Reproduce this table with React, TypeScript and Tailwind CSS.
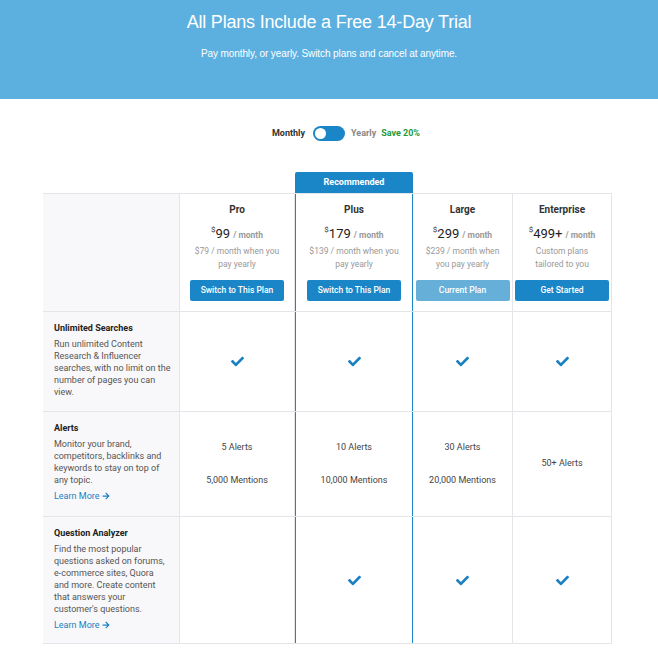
import { FaCheck, FaArrowRight } from "react-icons/fa"

const cols = "grid grid-cols-[137px_115px_118px_100px_99px]"

type Plan = {
    name: string
    price: string
    yearly: string[]
    button: string
    current?: boolean
    plus?: boolean
}

const plans: Plan[] = [
    { name: "Pro", price: "99", yearly: ["$79 / month when you", "pay yearly"], button: "Switch to This Plan" },
    { name: "Plus", price: "179", yearly: ["$139 / month when you", "pay yearly"], button: "Switch to This Plan", plus: true },
    { name: "Large", price: "299", yearly: ["$239 / month when", "you pay yearly"], button: "Current Plan", current: true },
    { name: "Enterprise", price: "499+", yearly: ["Custom plans", "tailored to you"], button: "Get Started" },
]

const Check = () => <FaCheck className="text-[#1a80c2] w-[13px] h-[13px]" />

const Cell = ({ plus, children }: { plus?: boolean; children?: React.ReactNode }) => {
    const side = plus ? "border-x border-[#1a86c7]" : "border-r border-[#e3e5e8]"
    return <div className={`${side} flex flex-col items-center justify-center text-[9px] text-[#444] bg-white`}>{children}</div>
}

const Feature = ({ title, lines, learn }: { title: string; lines: string[]; learn?: boolean }) => (
    <div className="bg-[#f8f8fa] border-r border-[#e3e5e8] pl-[11px] pr-[6px] pt-[10px] pb-[10px]">
        <div className="text-[9px] font-bold text-[#222] leading-[12px]">{title}</div>
        <div className="text-[9px] text-[#555] leading-[12px] mt-[4px] whitespace-nowrap">
            {lines.map((l) => <div key={l}>{l}</div>)}
        </div>
        {learn && (
            <div className="text-[9px] text-[#1a7fc1] leading-[12px] mt-[4px] flex items-center gap-[2px]">
                Learn More <FaArrowRight className="w-[8px] h-[8px]" />
            </div>
        )}
    </div>
)

export default function App() {
    return (
        <div className="min-h-[648px] bg-white" style={{ fontFamily: "Roboto, 'Liberation Sans', sans-serif" }}>
            <div className="bg-[#5cb0df] h-[99px] flex flex-col items-center text-white" style={{ fontFamily: "'Liberation Sans', Arial, sans-serif" }}>
                <h1 className="text-[18px] mt-[11px] leading-[22px] tracking-[-0.2px]">All Plans Include a Free 14-Day Trial</h1>
                <p className="text-[10px] mt-[15px] leading-[12px] tracking-[-0.1px]">Pay monthly, or yearly. Switch plans and cancel at anytime.</p>
            </div>

            <div className="flex items-center justify-center mt-[27px] pl-[34px] text-[9px] font-bold">
                <span className="text-[#333]">Monthly</span>
                <div className="ml-[8px] w-[32px] h-[15px] rounded-full bg-[#1a86c7] flex items-center px-[2px]">
                    <div className="w-[11px] h-[11px] rounded-full bg-white"></div>
                </div>
                <span className="text-[#888] ml-[6px]">Yearly</span>
                <span className="text-[#1f9a3c] ml-[5px]">Save 20%</span>
            </div>

            <div className="ml-[43px] mt-[31px] w-[569px]">
                <div className={cols}>
                    <div></div>
                    <div></div>
                    <div className="bg-[#1a86c7] h-[21px] rounded-t-[2px] text-white text-[9px] font-bold flex items-center justify-center">Recommended</div>
                </div>

                <div className={`${cols} border-y border-[#e3e5e8] h-[119px]`}>
                    <div className="bg-[#f8f8fa] border-r border-[#e3e5e8]"></div>
                    {plans.map((p) => (
                        <div key={p.name} className={`${p.plus ? "border-x border-[#1a86c7]" : "border-r border-[#e3e5e8]"} flex flex-col items-center pt-[9px] bg-white`}>
                            <div className="text-[10px] font-bold text-[#333] leading-[13px]">{p.name}</div>
                            <div className="mt-[9px] flex items-baseline leading-[17px]">
                                <span className="text-[8px] text-[#333] self-start leading-[10px]">$</span>
                                <span className="text-[13px] text-[#222]">{p.price}</span>
                                <span className="text-[8.5px] font-bold text-[#999] ml-[3px]">/ month</span>
                            </div>
                            <div className="text-[8.5px] text-[#999] leading-[13px] text-center mt-[1px]">
                                {p.yearly.map((l) => <div key={l}>{l}</div>)}
                            </div>
                            <button className={`${p.current ? "bg-[#66afd9]" : "bg-[#1a86c7]"} mt-[9px] w-[94px] h-[21px] rounded-[2px] text-white text-[8.5px] font-medium`}>{p.button}</button>
                        </div>
                    ))}
                </div>

                <div className={`${cols} border-b border-[#e3e5e8] h-[100px]`}>
                    <Feature title="Unlimited Searches" lines={["Run unlimited Content", "Research & Influencer", "searches, with no limit on the", "number of pages you can", "view."]} />
                    <Cell><Check /></Cell>
                    <Cell plus><Check /></Cell>
                    <Cell><Check /></Cell>
                    <Cell><Check /></Cell>
                </div>

                <div className={`${cols} border-b border-[#e3e5e8] h-[105px]`}>
                    <Feature title="Alerts" lines={["Monitor your brand,", "competitors, backlinks and", "keywords to stay on top of", "any topic."]} learn />
                    <Cell><div>5 Alerts</div><div className="mt-[20px]">5,000 Mentions</div></Cell>
                    <Cell plus><div>10 Alerts</div><div className="mt-[20px]">10,000 Mentions</div></Cell>
                    <Cell><div>30 Alerts</div><div className="mt-[20px]">20,000 Mentions</div></Cell>
                    <Cell><div>50+ Alerts</div></Cell>
                </div>

                <div className={`${cols} border-b border-[#e3e5e8] h-[127px]`}>
                    <Feature title="Question Analyzer" lines={["Find the most popular", "questions asked on forums,", "e-commerce sites, Quora", "and more. Create content", "that answers your", "customer's questions."]} learn />
                    <Cell></Cell>
                    <Cell plus><Check /></Cell>
                    <Cell><Check /></Cell>
                    <Cell><Check /></Cell>
                </div>
            </div>
        </div>
    )
}
